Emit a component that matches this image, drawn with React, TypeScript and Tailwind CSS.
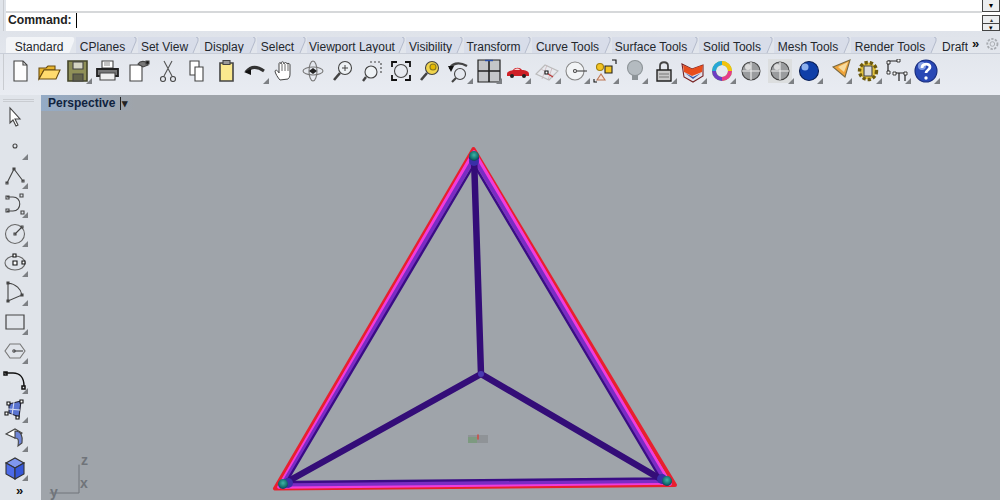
import type { ReactNode } from 'react';

const tabs = [
  { label: 'CPlanes', w: 'w-[53px]' },
  { label: 'Set View', w: 'w-[53px]' },
  { label: 'Display', w: 'w-[48px]' },
  { label: 'Select', w: 'w-[41px]' },
  { label: 'Viewport Layout', w: 'w-[90px]' },
  { label: 'Visibility', w: 'w-[49px]' },
  { label: 'Transform', w: 'w-[59px]' },
  { label: 'Curve Tools', w: 'w-[71px]' },
  { label: 'Surface Tools', w: 'w-[78px]' },
  { label: 'Solid Tools', w: 'w-[66px]' },
  { label: 'Mesh Tools', w: 'w-[68px]' },
  { label: 'Render Tools', w: 'w-[78px]' },
];

function Icon({ children, flyout }: { children: ReactNode; flyout?: boolean }) {
  return (
    <div className="relative h-[29.25px] w-[29.2px] shrink-0">
      <svg viewBox="0 0 24 24" className="absolute left-[2.6px] top-[2.6px] h-6 w-6" fill="none" stroke="#444" strokeWidth="1.1">
        {children}
      </svg>
      {flyout && (
        <svg viewBox="0 0 6 6" className="absolute bottom-[1px] right-[1px] h-[6px] w-[6px]">
          <path d="M6 0V6H0Z" fill="#7d8084" />
        </svg>
      )}
    </div>
  );
}

function TopToolbar() {
  return (
    <div className="ml-[3px] flex h-[36px] items-start border-l border-[#c9ccd1] pl-px pt-[2px]">
      <Icon><path d="M6 2h9l4 4v16H6Z" fill="#fdfdfd" /><path d="M15 2v4h4" /></Icon>
      <Icon><path d="M2 9h7l2-2h7v4H7l-5 9Z" fill="#e8b52e" stroke="#6b4d10" /><path d="M7 11h16l-4 9H2Z" fill="#ffdb6e" stroke="#6b4d10" /></Icon>
      <Icon flyout><path d="M2 2h19v20H2Z" fill="#8f9058" stroke="#44452a" strokeWidth="1.6" /><path d="M7 3h10v7H7Z" fill="#d6d6c4" /><path d="M7 15h10v7H7Z" fill="#62634a" /></Icon>
      <Icon><path d="M7 2h11v7H7Z" fill="#fff" /><path d="M2 10h21v7H2Z" fill="#777" stroke="#222" strokeWidth="1.8" /><path d="M5 14h15v7H5Z" fill="#eee" /><path d="M9 4l6 0M9 6h6" stroke="#888" /></Icon>
      <div className="w-[2px]" />
      <Icon><path d="M4 6h12v16H4Z" fill="#fff" /><path d="M12 5c2-3 5-3 8-2l2 3-5 2Z" fill="#777" /><path d="M20 2h3v3h-3Z" fill="#111" /></Icon>
      <Icon><path d="M8 2l8 15M16 2L8 17" stroke="#555" /><circle cx="7" cy="20" r="2.5" /><circle cx="17" cy="20" r="2.5" /></Icon>
      <Icon><path d="M5 2h9v14H5Z" fill="#fff" /><path d="M10 8h8v14h-8Z" fill="#fff" /></Icon>
      <Icon><path d="M6 4h13v18H6Z" fill="#fbe98e" strokeWidth="1.6" /><path d="M9 1.500h7v4H9Z" fill="#999" /></Icon>
      <Icon flyout><path d="M3 13c5-6 11-6 18-1" stroke="#333" strokeWidth="3" /><path d="M1 13l7-3v6Z" fill="#111" stroke="none" /></Icon>
      <Icon><path d="M8 21c-2-2-5-7-5-9 1-2 3 0 4 2V5c0-2 2-2 2 0 0-3 3-3 3 0 0-2 3-2 3 0 0-1 3-1 3 1v9c0 3-1 4-2 5Z" fill="#fff" strokeWidth="1" /><path d="M10 5v7M13 5v7M16 5v7" strokeWidth="0.8" /></Icon>
      <Icon><ellipse cx="12" cy="12" rx="10" ry="4" stroke="#777" /><ellipse cx="12" cy="12" rx="4" ry="10" stroke="#777" /><path d="M8 12l4-3 4 3-4 3Z" fill="#222" stroke="none" /></Icon>
      <Icon><circle cx="14" cy="9" r="6.500" fill="#eef2f5" /><path d="M9 14l-6 7" strokeWidth="2.600" /><path d="M11 9h6M14 6v6" strokeWidth="1" /></Icon>
      <Icon><circle cx="11" cy="13" r="6" fill="#eef2f5" /><path d="M6 18l-3 4" strokeWidth="2.400" /><path d="M10 3h11v11" strokeDasharray="2 2" /></Icon>
      <Icon><circle cx="12" cy="12" r="6.500" /><path d="M3 8V3h5M21 8V3h-5M3 16v5h5M21 16v5h-5" stroke="#111" strokeWidth="1.800" /></Icon>
      <Icon><circle cx="14" cy="9" r="6.500" fill="#f0d44d" /><circle cx="15" cy="8" r="3" fill="#e5b800" stroke="#8a7b20" /><path d="M9 14l-6 7" strokeWidth="2.600" /></Icon>
      <Icon flyout><circle cx="13" cy="15" r="5.500" /><path d="M9 19l-4 4" strokeWidth="2.200" /><path d="M3 10c1-5 8-8 17-3" stroke="#444" strokeWidth="2.400" /><path d="M1 7l6 0-3 6Z" fill="#111" stroke="none" /></Icon>
      <Icon flyout><path d="M1 1h22v22H1Z" fill="#c4c6c9" stroke="#222" strokeWidth="1.200" /><path d="M12 1v22M1 12h22" stroke="#222" strokeWidth="1.600" /><path d="M8 1.500h8" stroke="#2b4fa8" strokeWidth="1.400" /></Icon>
      <Icon flyout><path d="M1 15c0-3 4-3 6-4 2-3 7-3 9 0 3 0 7 1 7 4v2H1Z" fill="#cf2027" stroke="none" /><path d="M8 11c2-2 5-2 6 0Z" fill="#f5d6d6" stroke="none" /><circle cx="6" cy="17" r="2" fill="#222" stroke="none" /><circle cx="18" cy="17" r="2" fill="#222" stroke="none" /></Icon>
      <Icon flyout><path d="M1 15l9-9 13 6-9 9Z" fill="#e8e9ee" stroke="#bbb" /><path d="M6 10l12 7M12 6l-5 14M17 9l-4 12" stroke="#c9b6bb" strokeWidth="0.800" /><path d="M10 12h3v3h-3Z" fill="#fff" stroke="#111" /><path d="M13 15l5 3" stroke="#b33" /></Icon>
      <Icon flyout><circle cx="11" cy="12" r="9" stroke="#888" fill="#f2f4f6" /><circle cx="11" cy="12" r="1.500" fill="#fff" /><path d="M13 12h10" /></Icon>
      <Icon flyout><circle cx="7" cy="8" r="3.500" fill="#f3c423" stroke="#a08010" /><path d="M12 7h7v7h-7Z" fill="#f3c423" stroke="#222" /><path d="M8 15l-4 6h8Z" fill="#f6e1d6" stroke="#b75" /><path d="M19 1h4v4M1 20v3h3" stroke="#111" /></Icon>
      <Icon flyout><circle cx="12" cy="9" r="7.500" fill="#b4bbc0" stroke="#8d9498" /><path d="M9 16h6v5h-6Z" fill="#8d9498" stroke="none" /></Icon>
      <Icon flyout><path d="M8 11V7c0-5 8-5 8 0v4" strokeWidth="1.800" /><path d="M5 11h14v11H5Z" fill="#c8c8c8" stroke="#222" strokeWidth="1.400" /><path d="M7 15h10M7 18h10" stroke="#777" /></Icon>
      <Icon flyout><path d="M1 5l10 5 11-4v11l-10 6-9-5Z" fill="#dfe3ef" stroke="#722" /><path d="M2 6l9 4 11-4-1 7-10 4-8-4Z" fill="#e84d1c" stroke="none" /><path d="M4 14l8 4 8-4-8 6Z" fill="#3858a8" stroke="none" /></Icon>
      <Icon flyout><circle cx="12" cy="12" r="8" strokeWidth="4" stroke="#7ecb3f" /><path d="M12 4a8 8 0 0 1 8 8" stroke="#f4c20d" strokeWidth="4" /><path d="M20 12a8 8 0 0 1-8 8" stroke="#e63b8a" strokeWidth="4" /><path d="M12 20a8 8 0 0 1-8-8" stroke="#6d3cc4" strokeWidth="4" /><path d="M4 12a8 8 0 0 1 8-8" stroke="#27a6d9" strokeWidth="4" /></Icon>
      <Icon><circle cx="12" cy="12" r="9" fill="#9a9c9e" stroke="#444" /><path d="M3 12h18M12 3v18" stroke="#eee" /><circle cx="9" cy="8" r="3" fill="#dcdcdc" stroke="none" /></Icon>
      <Icon flyout><path d="M0 0h24v24H0Z" fill="#dcdedf" stroke="none" /><circle cx="12" cy="12" r="9" fill="#9a9c9e" stroke="#444" /><path d="M3 12h18M12 3v18" stroke="#eee" /><circle cx="9" cy="8" r="3" fill="#dcdcdc" stroke="none" /></Icon>
      <Icon flyout><circle cx="11" cy="12" r="9.500" fill="#0f3fa8" stroke="#0a1f55" /><circle cx="7" cy="8" r="3.500" fill="#8db1ee" stroke="none" /></Icon>
      <Icon flyout><path d="M6 8l17-7-5 17Z" fill="#f0a43a" stroke="#7b6a40" /><path d="M11 8l10-5-4 10Z" fill="#f6dca0" stroke="none" /></Icon>
      <Icon flyout><circle cx="12" cy="12" r="8.500" fill="#e2c23e" stroke="#6c5a10" strokeWidth="3.400" strokeDasharray="3.200 2" /><path d="M8 7h8v10H8Z" fill="#d9dadb" stroke="#444" /></Icon>
      <Icon flyout><path d="M3 2v11M3 2h10M9 14h11M14 14v8M20 14v8" stroke="#222" strokeWidth="1.200" /><path d="M2 2h3v3H2ZM12 0h3v3h-3ZM2 12h3v3H2ZM8 13h3v3H8ZM19 13h3v3h-3Z" fill="#fff" stroke="#111" strokeWidth="0.800" /></Icon>
      <Icon flyout><circle cx="12" cy="12" r="11" fill="#2948b5" stroke="#1a2f80" /><circle cx="8" cy="7" r="4" fill="#7f9be5" stroke="none" /><path d="M8 9c0-5 8-5 8-1 0 3-4 3-4 6" stroke="#fff" strokeWidth="2.800" /><circle cx="12" cy="19" r="1.700" fill="#fff" stroke="none" /></Icon>
    </div>
  );
}

const side: { flyout?: boolean; node: ReactNode }[] = [
  { node: <path d="M7 3v15l3-3 3 6 2-1-3-6h5Z" fill="#fff" stroke="#444" /> },
  { flyout: true, node: <circle cx="12" cy="12" r="2" stroke="#444" /> },
  { flyout: true, node: <path d="M4 20l7-14 9 12M3 19h2v2H3ZM10 5h2v2h-2ZM19 17h2v2h-2Z" /> },
  { flyout: true, node: <path d="M4 5h6c9 0 9 14 0 14H4M3 4h3v3H3ZM3 17h3v3H3ZM17 2h3v3h-3ZM18 19h3v3h-3Z" /> },
  { flyout: true, node: <><circle cx="12" cy="12" r="9.500" stroke="#666" /><path d="M12 12l7-7M11 11h2v2h-2ZM18 4h2v2h-2Z" /></> },
  { flyout: true, node: <><ellipse cx="12" cy="12" rx="10" ry="7" stroke="#666" /><path d="M10 10h4v4h-4ZM10 3h3v3h-3ZM19 10h3v3h-3Z" fill="#fff" stroke="#111" /></> },
  { flyout: true, node: <path d="M5 3c8 1 13 6 14 12L5 21ZM4 2h2v2H4ZM18 14h2v2h-2ZM4 20h2v2H4Z" stroke="#444" /> },
  { flyout: true, node: <path d="M3 6h18v14H3Z" strokeWidth="1.200" /> },
  { flyout: true, node: <><path d="M7 5h10l5 7-5 7H7l-5-7Z" stroke="#777" /><path d="M11 12h9" /><circle cx="11" cy="12" r="1.200" /></> },
  { flyout: true, node: <path d="M2 5h8c7 0 11 5 11 13M1 4h3v3H1ZM19 18h3v3h-3Z" stroke="#111" strokeWidth="1.500" /> },
  { flyout: true, node: <><path d="M6 7l12-3-2 16-10-4Z" fill="#5a74d0" stroke="#223" /><path d="M5 12l12 1M11 5l-2 13" stroke="#d8ddf2" /><path d="M4 5h3v3H4ZM17 3h3v3h-3ZM2 15h3v3H2ZM13 19h3v3h-3Z" fill="#fff" stroke="#111" /></> },
  { flyout: true, node: <><path d="M3 8l9-5 7 4-7 5Z" fill="#fff" stroke="#444" /><path d="M12 5c6 0 8 5 7 12l-4 3c1-7 0-8-3-8Z" fill="#6f86d8" stroke="#444" /></> },
  { flyout: true, node: <><path d="M3 7l9-5 9 5-9 5Z" fill="#7f97ef" stroke="#333" /><path d="M3 7v11l9 5V12Z" fill="#4d6be8" stroke="#333" /><path d="M21 7v11l-9 5V12Z" fill="#3557d8" stroke="#333" /></> },
];

function ModelView() {
  return (
    <svg viewBox="41 95 959 405" className="absolute inset-0 h-full w-full" fill="none" strokeLinecap="round">
      <defs>
        <radialGradient id="ball" cx="50%" cy="40%" r="60%">
          <stop offset="0%" stopColor="#3fb4a6" />
          <stop offset="70%" stopColor="#126e6e" />
          <stop offset="100%" stopColor="#123a5a" />
        </radialGradient>
      </defs>
      {/* outer silhouette */}
      <path d="M473.500 149L275 488.500L675 485Z" stroke="#e8202e" strokeWidth="4" strokeLinejoin="round" />
      {/* magenta band */}
      <path d="M474 152L279 487M474 152L670 484M282 487L668 483" stroke="#f03cdc" strokeWidth="3.500" />
      {/* purple band */}
      <path d="M476 155L283 484M472 155L665 481M284 484.500L665 481" stroke="#7a2cc4" strokeWidth="4" />
      <path d="M478 158L287 481M470 158L660 478M290 482L660 478.500" stroke="#3a0c85" strokeWidth="2.400" />
      {/* inner spokes */}
      <path d="M474 157L481 374M481 374L285 483M481 374L664 481" stroke="#340d78" strokeWidth="6.500" />
      <circle cx="481" cy="374" r="3" fill="#4a3ab0" />
      <circle cx="474" cy="161" r="5" fill="#3a2fa8" />
      <circle cx="288" cy="483" r="5" fill="#3a2fa8" />
      <circle cx="662" cy="479" r="5" fill="#3a2fa8" />
      <circle cx="474" cy="156" r="5" fill="url(#ball)" />
      <circle cx="283" cy="484" r="5" fill="url(#ball)" />
      <circle cx="667" cy="481" r="5" fill="url(#ball)" />
      <path d="M468 435h20v8h-20Z" fill="#8f9397" />
      <path d="M468 437h9v6h-9Z" fill="#7d9a80" />
      <path d="M478 435l0 4" stroke="#d04a40" strokeWidth="1.500" />
      <path d="M79 465V493H50" stroke="#70747a" strokeWidth="1" />
    </svg>
  );
}

export default function App() {
  return (
    <div className="flex h-[500px] w-[1000px] flex-col overflow-hidden bg-[#e0e4ea] font-['Liberation_Sans',sans-serif] text-[12px] text-[#23272d]">
      {/* command area */}
      <div className="flex h-[31px] shrink-0">
        <div className="ml-[3px] mr-[2px] w-px bg-[#c9ccd1]" />
        <div className="flex flex-1 flex-col bg-white">
          <div className="h-[13px] border-b-2 border-[#d6d8da]" />
          <div className="flex h-[18px] items-start pl-[2px] text-[12.2px] font-bold leading-[14px] text-[#222]">
            Command:
            <span className="ml-[4px] h-[15px] w-px bg-black" />
          </div>
        </div>
        <div className="flex w-[18px] flex-col bg-white">
          <div className="flex h-[12px] items-center justify-center border-x border-b border-[#444] bg-[#eceef0] text-[8px] leading-none text-black">▾</div>
          <div className="mt-[3px] flex h-[8px] items-center justify-center border-x border-t border-[#444] bg-[#eceef0] text-[6px] leading-none text-[#333]">▴</div>
          <div className="flex h-[8px] items-center justify-center border border-[#444] bg-[#eceef0] text-[7px] leading-none text-black">▾</div>
        </div>
      </div>

      {/* ribbon */}
      <div className="h-[64px] shrink-0 overflow-hidden bg-gradient-to-b from-[#dfe3ea] to-[#e9ecf2]">
        <div className="flex h-[23px] items-end overflow-hidden border-b border-[#c9ced8] pl-[6px]">
          <div className="mb-[-1px] flex h-[17px] w-[61px] shrink-0 items-center justify-center rounded-tl-[3px] bg-[#f3f5f8] pl-[5px] pt-[3px] leading-none">Standard</div>
          <svg viewBox="0 0 9 17" className="mb-[-1px] h-[17px] w-[9px] shrink-0">
            <path d="M0 0H5Q8 0 7 4L2 17H0Z" fill="#f3f5f8" />
          </svg>
          {tabs.map((tab) => (
            <div key={tab.label} className="flex shrink-0 items-end">
              <div className={`${tab.w} flex h-4 items-center justify-center bg-[#d8dde9] pt-[3px] leading-none`}>
                {tab.label}
              </div>
              <svg viewBox="0 0 9 16" className="h-4 w-[9px] shrink-0">
                <path d="M0 0H5Q8 0 7 4L2 16H0Z" fill="#d8dde9" />
                <path d="M5 0Q8 0 7 4L2 16" fill="none" stroke="#a9b1c4" strokeWidth="0.8" />
              </svg>
            </div>
          ))}
          <div className="flex h-4 w-[30px] shrink-0 items-center justify-end overflow-hidden pt-[3px] leading-none">Draft</div>
          <span className="ml-[4px] h-4 text-[13px] font-bold leading-none text-[#111]">»</span>
          <svg viewBox="0 0 16 16" className="mb-[1px] ml-[6px] h-4 w-4" fill="none" stroke="#a7abb0">
            <circle cx="8" cy="8" r="5.500" strokeDasharray="2.500 1.500" strokeWidth="2" />
            <circle cx="8" cy="8" r="2.500" />
          </svg>
        </div>
        <TopToolbar />
      </div>

      <div className="flex min-h-0 flex-1">
        {/* left toolbar */}
        <div className="flex w-[41px] shrink-0 flex-col items-start bg-[#e0e4ea] pt-[4px]">
          <div className="ml-[3px] h-[3px] w-[31px] shrink-0 border-y border-[#c9ccd1]" />
          {side.map((item, i) => (
            <Icon key={i} flyout={item.flyout}>{item.node}</Icon>
          ))}
          <span className="ml-[16px] mt-[2px] text-[13px] font-bold leading-none text-[#111]">»</span>
        </div>

        {/* viewport */}
        <div className="relative flex-1 bg-[#9fa4aa]">
          <ModelView />
          <div className="relative flex h-4 w-[94px] items-center bg-gradient-to-r from-[#94abc6] to-[#9fa4aa] pl-[7px] font-bold leading-none text-[#10233f]">
            Perspective
            <span className="ml-[5px] h-[13px] w-px bg-[#222]" />
            <span className="ml-px text-[11px] text-[#222]">▾</span>
          </div>
          <span className="absolute left-[40px] top-[358px] text-[14px] font-bold leading-none text-[#70747a]">z</span>
          <span className="absolute left-[39px] top-[381px] text-[14px] font-bold leading-none text-[#70747a]">x</span>
          <span className="absolute left-[9px] top-[390px] text-[14px] font-bold leading-none text-[#70747a]">y</span>
        </div>
      </div>
    </div>
  );
}
